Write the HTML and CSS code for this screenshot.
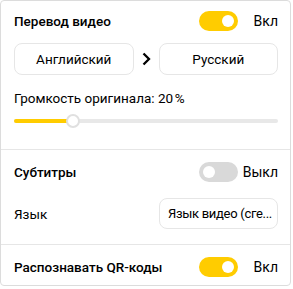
FILE: index.html
```html
<!DOCTYPE html>
<html lang="ru">
<head>
<meta charset="utf-8">
<link rel="stylesheet" href="styles.css">
</head>
<body>
<div class="panel">
  <section class="section first">
    <div class="row">
      <span class="title">Перевод видео</span>
      <div class="switch-wrap">
        <span class="toggle on"><span class="knob"></span></span>
        <span class="state">Вкл</span>
      </div>
    </div>
    <div class="langs">
      <button class="btn">Английский</button>
      <span class="chev"><svg width="10" height="14" viewBox="0 0 10 14"><path d="M2.5 1.5 L8 7 L2.5 12.5" fill="none" stroke="#000" stroke-width="2.3"/></svg></span>
      <button class="btn">Русский</button>
    </div>
    <div class="vol-label">Громкость оригинала: 20&#8239;%</div>
    <div class="slider">
      <div class="track"><div class="fill" style="width:20%"></div></div>
      <span class="thumb" style="left:20%"></span>
    </div>
  </section>
  <section class="section second">
    <div class="row">
      <span class="title">Субтитры</span>
      <div class="switch-wrap">
        <span class="toggle off"><span class="knob"></span></span>
        <span class="state">Выкл</span>
      </div>
    </div>
    <div class="row lang-row">
      <span class="label">Язык</span>
      <button class="btn select">Язык видео (сге...</button>
    </div>
  </section>
  <section class="section third">
    <div class="row">
      <span class="title">Распознавать QR-коды</span>
      <div class="switch-wrap">
        <span class="toggle on"><span class="knob"></span></span>
        <span class="state">Вкл</span>
      </div>
    </div>
  </section>
</div>
</body>
</html>
```

FILE: styles.css
```css
* { box-sizing: border-box; }
html, body { margin: 0; padding: 0; background: #fff; }
body {
  font-family: Roboto, "Liberation Sans", Arial, sans-serif;
  color: #000;
  font-size: 13.5px;
}
.panel {
  width: 291px;
  height: 286px;
  border: 1px solid #dcdcdc;
  border-radius: 4px;
  overflow: hidden;
}
.section {
  padding: 0 12px 0 13px;
}
.section + .section { border-top: 1px solid #e6e6e6; }
.first { padding-top: 10px; height: 148px; }
.second { padding-top: 12px; height: 95px; }
.third { padding-top: 12px; }
.row {
  display: flex;
  align-items: center;
  justify-content: space-between;
  height: 20px;
}
.title {
  font-size: 13.5px;
  font-weight: 500;
}
.label { font-size: 13.5px; }
.switch-wrap {
  display: flex;
  align-items: center;
}
.toggle {
  position: relative;
  width: 39px;
  height: 20px;
  border-radius: 10px;
  display: block;
}
.toggle.on { background: #ffcc00; }
.toggle.off { background: #d9d9d9; }
.knob {
  position: absolute;
  top: 4px;
  width: 12px;
  height: 12px;
  border-radius: 50%;
  background: #fff;
}
.on .knob { right: 4px; }
.off .knob { left: 4px; }
.state {
  width: 40px;
  text-align: right;
  font-size: 14px;
}
.langs {
  display: grid;
  grid-template-columns: 1fr 25px 1fr;
  margin-top: 12px;
  height: 32px;
}
.btn {
  font-family: inherit;
  font-size: 13.5px;
  color: #000;
  background: #fff;
  border: 1px solid #e6e6e6;
  border-radius: 8px;
  height: 32px;
  padding: 0 8px;
}
.chev {
  display: flex;
  align-items: center;
  justify-content: center;
}
.vol-label {
  margin-top: 15px;
  line-height: 16px;
}
.slider {
  position: relative;
  margin-top: 13px;
  height: 4px;
}
.track {
  height: 4px;
  border-radius: 2px;
  background: #e8e8e8;
  overflow: hidden;
}
.fill {
  height: 100%;
  background: #ffcc00;
}
.thumb {
  position: absolute;
  top: -5px;
  width: 14px;
  height: 14px;
  margin-left: -1px;
  border-radius: 50%;
  background: #fff;
  border: 2px solid #e0e0e0;
}
.lang-row {
  margin-top: 16px;
  height: 31px;
}
.select {
  width: 119px;
  height: 31px;
  text-align: left;
  font-size: 13px;
  letter-spacing: -0.3px;
  padding: 0 4px 0 8px;
  white-space: nowrap;
  overflow: hidden;
}
```
